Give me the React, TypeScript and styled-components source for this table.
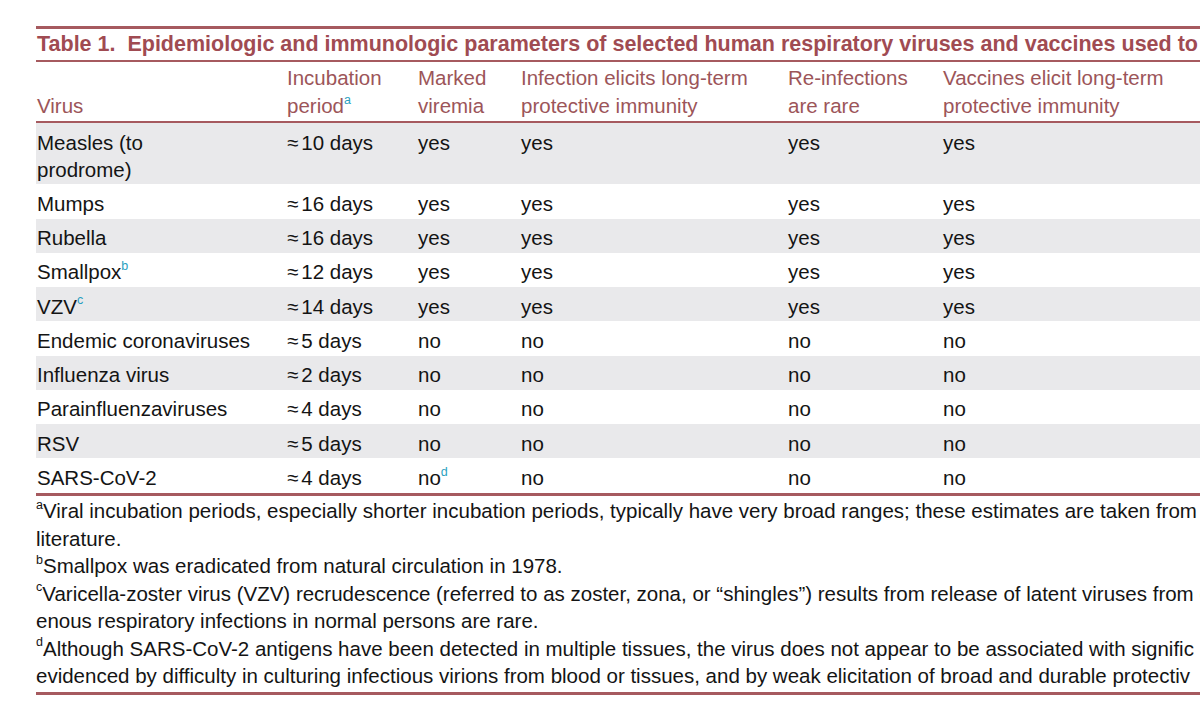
import styled, { createGlobalStyle } from 'styled-components';

const GlobalStyle = createGlobalStyle`
  html, body {
    margin: 0;
    padding: 0;
    background: #ffffff;
  }
  body {
    font-family: 'Liberation Sans', Arial, Helvetica, sans-serif;
  }
`;

type Row = {
  virus: string[];
  virusNote?: string;
  incubation: string;
  viremia: string;
  viremiaNote?: string;
  infection: string;
  reinfection: string;
  vaccine: string;
};

const rows: Row[] = [
  { virus: ['Measles (to', 'prodrome)'], incubation: '10 days', viremia: 'yes', infection: 'yes', reinfection: 'yes', vaccine: 'yes' },
  { virus: ['Mumps'], incubation: '16 days', viremia: 'yes', infection: 'yes', reinfection: 'yes', vaccine: 'yes' },
  { virus: ['Rubella'], incubation: '16 days', viremia: 'yes', infection: 'yes', reinfection: 'yes', vaccine: 'yes' },
  { virus: ['Smallpox'], virusNote: 'b', incubation: '12 days', viremia: 'yes', infection: 'yes', reinfection: 'yes', vaccine: 'yes' },
  { virus: ['VZV'], virusNote: 'c', incubation: '14 days', viremia: 'yes', infection: 'yes', reinfection: 'yes', vaccine: 'yes' },
  { virus: ['Endemic coronaviruses'], incubation: '5 days', viremia: 'no', infection: 'no', reinfection: 'no', vaccine: 'no' },
  { virus: ['Influenza virus'], incubation: '2 days', viremia: 'no', infection: 'no', reinfection: 'no', vaccine: 'no' },
  { virus: ['Parainfluenzaviruses'], incubation: '4 days', viremia: 'no', infection: 'no', reinfection: 'no', vaccine: 'no' },
  { virus: ['RSV'], incubation: '5 days', viremia: 'no', infection: 'no', reinfection: 'no', vaccine: 'no' },
  { virus: ['SARS-CoV-2'], incubation: '4 days', viremia: 'no', viremiaNote: 'd', infection: 'no', reinfection: 'no', vaccine: 'no' },
];

const footnotes: { mark: string; lines: string[] }[] = [
  {
    mark: 'a',
    lines: [
      'Viral incubation periods, especially shorter incubation periods, typically have very broad ranges; these estimates are taken from',
      'literature.',
    ],
  },
  { mark: 'b', lines: ['Smallpox was eradicated from natural circulation in 1978.'] },
  {
    mark: 'c',
    lines: [
      'Varicella-zoster virus (VZV) recrudescence (referred to as zoster, zona, or \u201cshingles\u201d) results from release of latent viruses from g',
      'enous respiratory infections in normal persons are rare.',
    ],
  },
  {
    mark: 'd',
    lines: [
      'Although SARS-CoV-2 antigens have been detected in multiple tissues, the virus does not appear to be associated with signific',
      'evidenced by difficulty in culturing infectious virions from blood or tissues, and by weak elicitation of broad and durable protectiv',
    ],
  },
];

export default function App() {
  return (
    <Page>
      <GlobalStyle />
      <Sheet>
        <Rule $h={3} />
        <Title>Table 1.&nbsp; Epidemiologic and immunologic parameters of selected human respiratory viruses and vaccines used to</Title>
        <Rule $h={2} />
        <HeadRow>
          <HeadCell>Virus</HeadCell>
          <HeadCell>
            Incubation
            <br />
            period<Sup $teal>a</Sup>
          </HeadCell>
          <HeadCell>
            Marked
            <br />
            viremia
          </HeadCell>
          <HeadCell>
            Infection elicits long-term
            <br />
            protective immunity
          </HeadCell>
          <HeadCell>
            Re-infections
            <br />
            are rare
          </HeadCell>
          <HeadCell>
            Vaccines elicit long-term
            <br />
            protective immunity
          </HeadCell>
        </HeadRow>
        <Rule $h={2} />
        {rows.map((r, i) => (
          <BodyRow key={r.virus.join(' ')} $shade={i % 2 === 0}>
            <Cell>
              {r.virus.map((line, j) => (
                <span key={line}>
                  {j > 0 && <br />}
                  {line}
                </span>
              ))}
              {r.virusNote && <Sup $teal>{r.virusNote}</Sup>}
            </Cell>
            <Cell>
              <Approx>≈</Approx>
              {r.incubation}
            </Cell>
            <Cell>
              {r.viremia}
              {r.viremiaNote && <Sup $teal>{r.viremiaNote}</Sup>}
            </Cell>
            <Cell>{r.infection}</Cell>
            <Cell>{r.reinfection}</Cell>
            <Cell>{r.vaccine}</Cell>
          </BodyRow>
        ))}
        <Rule $h={3} />
        <Notes>
          {footnotes.map((n) => (
            <Note key={n.mark}>
              {n.lines.map((line, j) => (
                <NoteLine key={j}>
                  {j === 0 && <Sup>{n.mark}</Sup>}
                  {line}
                </NoteLine>
              ))}
            </Note>
          ))}
        </Notes>
        <Rule $h={3} />
      </Sheet>
    </Page>
  );
}

const Page = styled.div`
  width: 1200px;
  height: 721px;
  overflow: hidden;
  background: #ffffff;
`;

const Sheet = styled.div`
  width: 1560px;
  margin-left: 36px;
  padding-top: 26px;
`;

const Rule = styled.div<{ $h: number }>`
  height: ${({ $h }) => $h}px;
  background: #a65a5f;
`;

const Title = styled.div`
  padding-left: 1px;
  font-size: 21.5px;
  font-weight: 700;
  line-height: 31px;
  color: #a04b52;
  white-space: nowrap;
`;

const columns = '250px 131px 103px 267px 155px 1fr';

const HeadRow = styled.div`
  display: grid;
  grid-template-columns: ${columns};
  align-items: end;
  padding: 2px 0 1px;
`;

const HeadCell = styled.div`
  padding-left: 1px;
  font-size: 20.5px;
  line-height: 28px;
  color: #9c5559;
  white-space: nowrap;
`;

const BodyRow = styled.div<{ $shade: boolean }>`
  display: grid;
  grid-template-columns: ${columns};
  padding: 5.5px 0 1.75px;
  background: ${({ $shade }) => ($shade ? '#e9e9eb' : '#ffffff')};
`;

const Cell = styled.div`
  padding-left: 1px;
  font-size: 20.5px;
  line-height: 27px;
  color: #141414;
  white-space: nowrap;
`;

const Approx = styled.span`
  margin-right: 3px;
`;

const Sup = styled.sup<{ $teal?: boolean }>`
  position: relative;
  top: -0.1em;
  font-size: 12.5px;
  line-height: 0;
  color: ${({ $teal }) => ($teal ? '#2a9fc0' : '#141414')};
`;

const Notes = styled.div`
  padding: 1.5px 0 2.5px;
`;

const Note = styled.div`
  display: flex;
  flex-direction: column;
`;

const NoteLine = styled.div`
  font-size: 20.5px;
  line-height: 27.5px;
  color: #141414;
  white-space: nowrap;
`;
